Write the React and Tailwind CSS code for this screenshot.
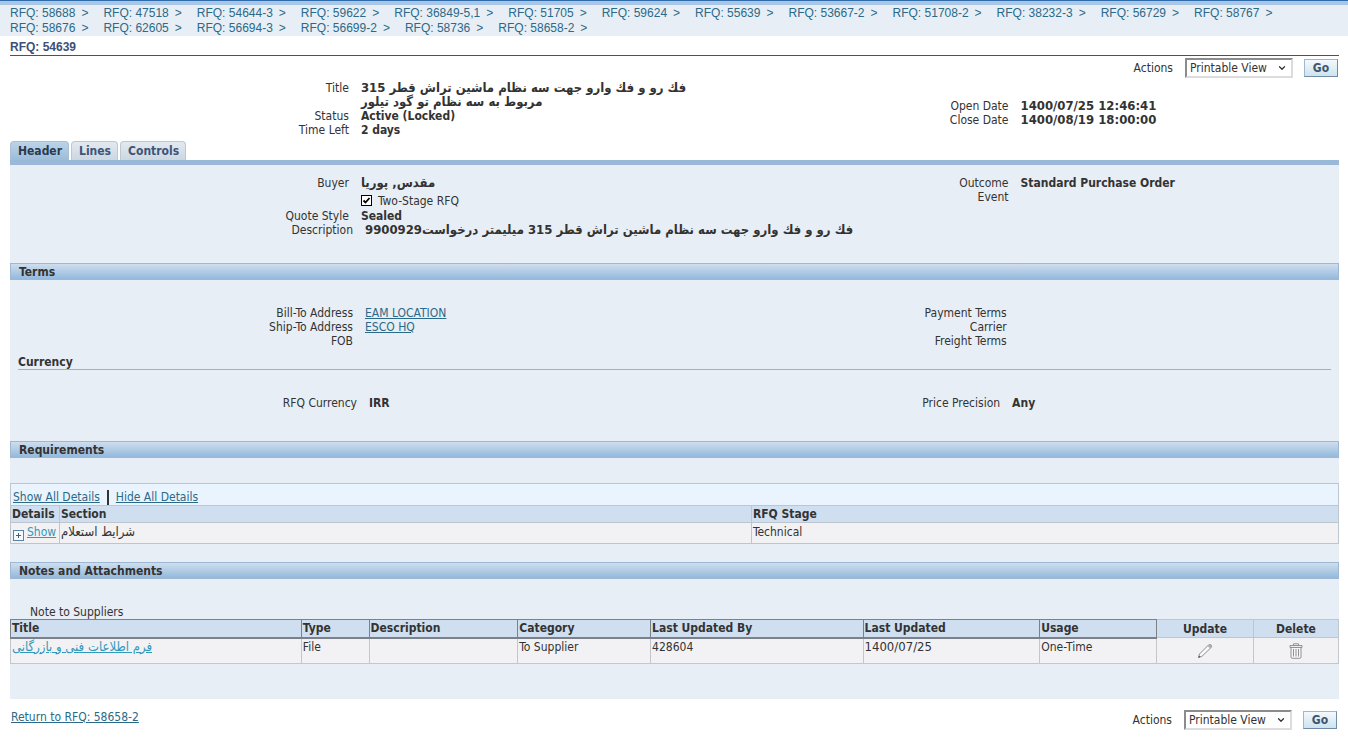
import { ChevronDown } from 'lucide-react';

const crumbs = [
  ['58688', '47518', '54644-3', '59622', '36849-5,1', '51705', '59624', '55639', '53667-2', '51708-2', '38232-3', '56729', '58767'],
  ['58676', '62605', '56694-3', '56699-2', '58736', '58658-2'],
];

const tabs = ['Header', 'Lines', 'Controls'];

const link = 'text-[#2a6a88] underline';

function Breadcrumbs() {
  return (
    <div className="border-t border-[#2f6cac]">
      <nav className="border-t-4 border-[#a9c6e6] bg-[#e8eef5] px-[10px] pt-px font-['Liberation_Sans',Arial,sans-serif] text-[#2a6a88]">
        {crumbs.map((row) => (
          <ul key={row[0]} className="flex flex-wrap gap-x-[15px] leading-[15px]">
            {row.map((n) => (
              <li key={n} className="whitespace-nowrap">
                <a href="#">RFQ: {n}</a>
                <span className="ml-[6px]">&gt;</span>
              </li>
            ))}
          </ul>
        ))}
      </nav>
    </div>
  );
}

function Actions({ id }) {
  return (
    <div className="flex items-center">
      <label htmlFor={id}>Actions</label>
      <div className="relative ml-3 w-[108px]">
        <select
          id={id}
          className="h-5 w-full appearance-none border-2 border-t-[#8c8c8c] border-r-[#dcdcdc] border-b-[#dcdcdc] border-l-[#8c8c8c] bg-white pl-[3px]"
        >
          <option>Printable View</option>
        </select>
        <ChevronDown size={10} strokeWidth={3} className="pointer-events-none absolute top-[5px] right-[6px]" />
      </div>
      <button className="ml-[11px] h-[18px] w-[34px] border border-[#9fb6cc] border-r-[#6f8ba8] border-b-[#6f8ba8] bg-linear-to-b from-[#f4f9fc] to-[#cde3ef] leading-[14px] font-bold text-[#40566e]">
        Go
      </button>
    </div>
  );
}

function Fields({ rows, labelClassName, className, valueClassName = '' }) {
  return (
    <dl className={className}>
      {rows.map(([label, value]) => (
        <div key={label} className="flex">
          <dt className={`shrink-0 text-right ${labelClassName}`}>{label}</dt>
          <dd className={`ml-3 font-bold whitespace-nowrap ${valueClassName}`}>{value}</dd>
        </div>
      ))}
    </dl>
  );
}

function SectionBar({ children }) {
  return (
    <h2 className="h-[17px] border border-[#9cb8d4] bg-linear-to-b from-[#cfdeed] to-[#93b9dc] pl-2 text-[12px] leading-4 font-bold">
      {children}
    </h2>
  );
}

function PencilIcon() {
  return (
    <svg width="16" height="16" viewBox="0 0 16 16" aria-hidden="true">
      <path d="M1.5 14.5 L2.5 11 L11.5 2 Q13 .8 14.2 2 Q15.2 3 14.2 4.5 L5 13.2 Z" fill="#fafafa" stroke="#8d8d8d" strokeWidth="1" />
      <path d="M10.5 3 L13.2 5.6 L14.4 4.4 Q15.2 3 14.2 2 Q13 .8 11.7 1.8 Z" fill="#b0b0b0" />
      <path d="M1.2 14.8 L2.2 12.8 L3.4 14 Z" fill="#444" />
    </svg>
  );
}

function TrashIcon() {
  return (
    <svg width="14" height="16" viewBox="0 0 14 16" fill="none" stroke="#929292" aria-hidden="true">
      <path d="M4.5 2 V.8 H9.5 V2" />
      <path d="M1 2.5 H13 V4.5 H1 Z" fill="#ececec" />
      <path d="M2 4.5 H12 V14 Q12 15.3 10.8 15.3 H3.2 Q2 15.3 2 14 Z" fill="#f5f5f5" />
      <path d="M4.5 6 V13.5 M7 6 V13.5 M9.5 6 V13.5" />
    </svg>
  );
}

const noteColumns = [
  ['Title', 'w-[21.9%]'],
  ['Type', 'w-[5.1%]'],
  ['Description', 'w-[11.2%]'],
  ['Category', 'w-[10%]'],
  ['Last Updated By', 'w-[16%]'],
  ['Last Updated', 'w-[13.3%]'],
  ['Usage', 'w-[8.8%]'],
];

export default function App() {
  return (
    <div className="bg-white font-['DejaVu_Sans_Condensed','DejaVu_Sans',sans-serif] text-[12px] leading-[14px] text-[#333]">
      <Breadcrumbs />

      <div className="mr-[9px] mb-1 ml-[10px]">
        <h1 className="border-b border-[#43536e] pt-1 pb-px font-['Liberation_Sans',Arial,sans-serif] text-[12px] font-bold text-[#3c5078]">
          RFQ: 54639
        </h1>

        <div className="mt-[2px] mr-px flex justify-end">
          <Actions id="actions-top" />
        </div>

        <div className="mt-[3px] grid grid-cols-2 items-center">
          <Fields
            labelClassName="w-[51%]"
            rows={[
              ['Title', <span className="text-[13px]">فك رو و فك وارو جهت سه نظام ماشين تراش قطر 315<br />مربوط به سه نظام تو گود تيلور</span>],
              ['Status', 'Active (Locked)'],
              ['Time Left', '2 days'],
            ]}
          />
          <Fields
            className="pt-2"
            labelClassName="w-[334px]"
            valueClassName="text-[13px]"
            rows={[['Open Date', '1400/07/25 12:46:41'], ['Close Date', '1400/08/19 18:00:00']]}
          />
        </div>

        <div className="mt-1 flex gap-[2px]">
          {tabs.map((tab, i) => (
            <a
              key={tab}
              href="#"
              className={`h-[19px] rounded-t border border-b-0 pr-[6px] pl-[7px] leading-[18px] font-bold ${
                i === 0
                  ? 'border-[#a9bfd6] bg-linear-to-b from-[#bcd3e8] to-[#9bbcda] text-[#2b3a4e]'
                  : 'border-[#bcc8d4] bg-linear-to-b from-[#e3e9f0] to-[#ccd7e2] text-[#3d5578]'
              }`}
            >
              {tab}
            </a>
          ))}
        </div>

        <main className="border-t-[5px] border-[#9ab9d8] bg-[#e8eef5] pb-[35px]">
          <div className="grid grid-cols-2 pt-[11px]">
            <div>
              <Fields labelClassName="w-[51%]" valueClassName="text-[13px]" rows={[['Buyer', 'مقدس, پوریا']]} />
              <div className="flex h-[19px] items-center pt-[2px] pl-[51%]">
                <input
                  id="two-stage"
                  type="checkbox"
                  defaultChecked
                  className="ml-3 size-[11px] appearance-none border border-black bg-white checked:bg-[url('data:image/svg+xml,%3Csvg%20xmlns=%22http://www.w3.org/2000/svg%22%20viewBox=%220%200%209%209%22%3E%3Cpath%20d=%22M1.5%204.5L3.5%206.5L7.5%202%22%20fill=%22none%22%20stroke=%22black%22%20stroke-width=%221.8%22/%3E%3C/svg%3E')]"
                />
                <label htmlFor="two-stage" className="ml-[6px]">Two-Stage RFQ</label>
              </div>
              <Fields labelClassName="w-[51%]" rows={[['Quote Style', 'Sealed']]} />
              <Fields
                labelClassName="w-[343px]"
                valueClassName="text-[13px]"
                rows={[['Description', 'فك رو و فك وارو جهت سه نظام ماشين تراش قطر 315 میلیمتر درخواست9900929']]}
              />
            </div>
            <Fields labelClassName="w-[334px]" rows={[['Outcome', 'Standard Purchase Order'], ['Event', '']]} />
          </div>

          <div className="mt-[26px]">
            <SectionBar>Terms</SectionBar>
          </div>
          <div className="mt-[26px] grid grid-cols-2">
            <Fields
              labelClassName="w-[343px]"
              rows={[
                ['Bill-To Address', <a href="#" className={`${link} font-normal`}>EAM LOCATION</a>],
                ['Ship-To Address', <a href="#" className={`${link} font-normal`}>ESCO HQ</a>],
                ['FOB', ''],
              ]}
            />
            <Fields labelClassName="w-[50%]" rows={[['Payment Terms', ''], ['Carrier', ''], ['Freight Terms', '']]} />
          </div>

          <h3 className="mx-2 mt-2 border-b border-[#94b4d2] text-[12px] leading-[13px] font-bold">Currency</h3>
          <div className="mt-[26px] mb-[31px] grid grid-cols-2">
            <Fields labelClassName="w-[347px]" rows={[['RFQ Currency', 'IRR']]} />
            <Fields labelClassName="w-[49%]" rows={[['Price Precision', 'Any']]} />
          </div>

          <SectionBar>Requirements</SectionBar>
          <div className="mt-[25px] border border-b-0 border-[#bcc6cf] bg-[#eaf4fe] pt-[6px] pl-[2px]">
            <a href="#" className={link}>Show All Details</a>
            <span className="mx-[7px] inline-block h-[15px] w-[2px] bg-[#333] align-middle" />
            <a href="#" className={link}>Hide All Details</a>
          </div>
          <table className="w-full table-fixed border-collapse text-left">
            <thead>
              <tr className="h-[17px] bg-[#cfdfef]">
                <th className="w-[49px] border border-[#bcc6cf] pl-px">Details</th>
                <th className="w-[52.1%] border border-[#bcc6cf] pl-px">Section</th>
                <th className="border border-[#bcc6cf] pl-px">RFQ Stage</th>
              </tr>
            </thead>
            <tbody>
              <tr className="h-[21px] bg-[#f2f2f5] align-top">
                <td className="border border-[#bcc6cf] pt-[2px] pl-[2px]">
                  <a href="#" className="flex gap-[3px] text-[#3399bb]">
                    <svg width="11" height="11" viewBox="0 0 11 11" className="mt-[5px] shrink-0" aria-hidden="true">
                      <rect x=".5" y=".5" width="10" height="10" fill="#f6fafd" stroke="#5c82a8" />
                      <path d="M3 5.5 H8 M5.5 3 V8" stroke="#44607e" />
                    </svg>
                    <span className="underline">Show</span>
                  </a>
                </td>
                <td className="border border-[#bcc6cf] pt-[2px] pl-px text-[13px]">شرایط استعلام</td>
                <td className="border border-[#bcc6cf] pt-[2px] pl-px">Technical</td>
              </tr>
            </tbody>
          </table>

          <div className="mt-[18px]">
            <SectionBar>Notes and Attachments</SectionBar>
          </div>
          <p className="mt-[26px] pl-5">Note to Suppliers</p>
          <table className="w-full table-fixed border-collapse text-left">
            <thead>
              <tr className="h-[18px] bg-[#cfdfef]">
                {noteColumns.map(([name, width]) => (
                  <th key={name} className={`border-x border-t border-b-2 border-[#7c8088] pl-px ${width}`}>{name}</th>
                ))}
                <th className="w-[7.3%] border border-[#bcc6cf] text-center">Update</th>
                <th className="border border-[#bcc6cf] text-center">Delete</th>
              </tr>
            </thead>
            <tbody>
              <tr className="h-[26px] bg-[#f2f2f5] align-top [&>td]:border [&>td]:border-[#c3c6ca] [&>td]:pt-px [&>td]:pl-px">
                <td><a href="#" className="text-[13px] text-[#3399bb] underline">فرم اطلاعات فنی و بازرگانی</a></td>
                <td>File</td>
                <td />
                <td>To Supplier</td>
                <td>428604</td>
                <td className="text-[13px]">1400/07/25</td>
                <td>One-Time</td>
                <td>
                  <button aria-label="Update" className="mx-auto mt-1 block"><PencilIcon /></button>
                </td>
                <td>
                  <button aria-label="Delete" className="mx-auto mt-1 block"><TrashIcon /></button>
                </td>
              </tr>
            </tbody>
          </table>
        </main>

        <footer className="mt-[11px] flex items-start justify-between pr-[2px] pl-px">
          <a href="#" className={link}>Return to RFQ: 58658-2</a>
          <Actions id="actions-bottom" />
        </footer>
      </div>
    </div>
  );
}
